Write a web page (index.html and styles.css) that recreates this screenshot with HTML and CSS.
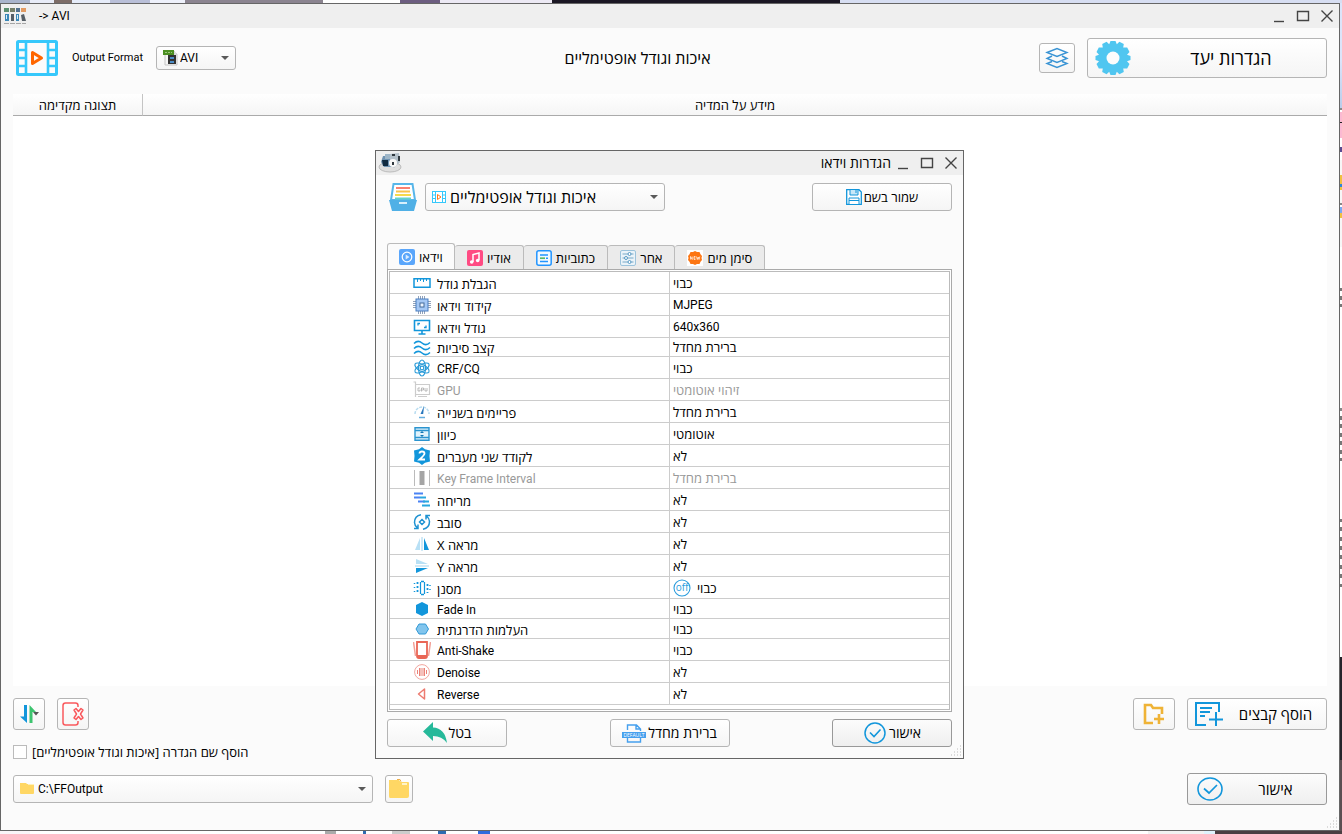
FILE: index.html
```html
<!DOCTYPE html>
<html lang="he">
<head>
<meta charset="utf-8">
<title>-&gt; AVI</title>
<link rel="stylesheet" href="styles.css">
</head>
<body>
<main class="window">
  <header class="titlebar">
    <svg class="app-icon" viewBox="0 0 24 18" aria-hidden="true"><rect x="1" y="1" width="5" height="4" fill="#5b8f70"/><rect x="7" y="1" width="5" height="4" fill="#77806a"/><rect x="13" y="1" width="4" height="4" fill="#53718d"/><rect x="18" y="1" width="5" height="4" fill="#e19a62"/><path d="M2 7h4v7H2zM13 7h3v7h-3z" fill="#3b88b8"/><path d="M8 7h3v7H8zM18 8l3-1 2 7h-4z" fill="#555e66"/><path d="M3 8h1v4H3zM14 8h1v4h-1z" fill="#d8edf5"/><path d="M1 16.500h22" stroke="#a5a5a5" stroke-dasharray="5 1"/></svg>
    <h1 class="window-title" lang="en">-&gt; AVI</h1>
    <div class="controls">
      <button aria-label="Minimize"><svg viewBox="0 0 14 14"><path d="M2 12.500h10"/></svg></button>
      <button aria-label="Maximize"><svg viewBox="0 0 14 14"><path d="M1.500 2.500h11v9h-11z"/></svg></button>
      <button aria-label="Close"><svg viewBox="0 0 14 14"><path d="M1.500 1.500l11 11M12.500 1.500l-11 11"/></svg></button>
    </div>
  </header>

  <section class="toolbar">
    <svg class="film" viewBox="0 0 42 36" aria-hidden="true"><rect x="1.500" y="1.500" width="39" height="33" rx="1" fill="none" stroke="#36c8fb" stroke-width="3"/><path d="M10 1v34M32 1v34M2 10h8M2 18h8M2 26h8M32 10h8M32 18h8M32 26h8" stroke="#36c8fb" stroke-width="2.600"/><path d="M16.500 12.500v11l9-5.500z" fill="none" stroke="#ff6600" stroke-width="3" stroke-linejoin="round"/></svg>
    <label class="format-label" for="format" lang="en">Output Format</label>
    <div class="combo combo-format" lang="en">
      <svg class="combo-icon" viewBox="0 0 16 16" aria-hidden="true"><path d="M3 1h9l3 3v11H3z" fill="#f6f6f6" stroke="#c4c4c4"/><path d="M12 1v3h3" fill="#fff" stroke="#c4c4c4"/><path d="M1 0h11v5H1z" fill="#4c8f22"/><path d="M3 2.500h7" stroke="#9cc77c" stroke-dasharray="2 1"/><rect x="6" y="5" width="8" height="9" fill="#333"/><path d="M8 7h4v2H8zM8 11h4v2H8z" fill="#4b8dc8"/></svg>
      <select id="format"><option>AVI</option></select>
    </div>
    <h2 class="quality" dir="rtl">איכות וגודל אופטימליים</h2>
    <button class="btn btn-layers" aria-label="Layers"><svg viewBox="0 0 24 22"><path d="M2 5.500l10-4 10 4-10 4zM7 9l-5 2.500 10 4 10-4L17 9M7 14.500L2 16.500l10 4 10-4-5-2" fill="none" stroke="#3a94d4" stroke-width="1.400"/></svg></button>
    <button class="btn btn-output" dir="ltr"><svg viewBox="0 0 36 36"><path d="M15.500 1h5l1.300 3.300 2.600-2.600 4.400 2.400-.6 3.500h4l2.300 4.500-2.500 2.600 3.500 1.300v4l-3.500 1.300 2.500 2.600-2.300 4.500h-4l.6 3.500-4.400 2.400-2.600-2.600L20.500 35h-5l-1.300-3.300-2.600 2.600-4.400-2.400.6-3.500h-4l-2.300-4.500 2.500-2.600L.5 20v-4L4 14.700l-2.500-2.600 2.300-4.500h4l-.6-3.500 4.400-2.400 2.600 2.600z" fill="#50c6f0"/><circle cx="18" cy="18" r="6.500" fill="#fcfcfc"/></svg><span>הגדרות יעד</span></button>
  </section>

  <section class="media">
    <table class="media-table">
      <thead><tr><th class="preview" scope="col">תצוגה מקדימה</th><th scope="col">מידע על המדיה</th></tr></thead>
    </table>
  </section>

  <footer class="footer">
    <div class="row row-files">
      <button class="btn btn-square" aria-label="Sort"><svg viewBox="0 0 20 20"><path d="M8 1v18L1 12.500h4V1z" fill="#1296db"/><path d="M10.500 19V1l6.500 7h-3.500v11z" fill="#3dc46f"/><path d="M14 8h6l-3 3.500z" fill="#555"/></svg></button>
      <button class="btn btn-square" aria-label="Remove"><svg class="remove-icon" viewBox="0 0 24 26"><path d="M17 6V4.500Q17 2 14.500 2H4.500Q2 2 2 4.500v17Q2 24 4.500 24h10Q17 24 17 21.500V20" fill="none" stroke="#f9595d" stroke-width="1.500"/><path d="M13 9l2-1.500 2.500 3 2.500-3L22 9l-2.500 4 2.500 4-2 1.500-2.500-3-2.500 3L13 17l2.500-4z" fill="none" stroke="#f9595d" stroke-width="1.500" stroke-linejoin="round"/></svg></button>
      <span class="spacer"></span>
      <button class="btn btn-folder-add" aria-label="Add folder"><svg viewBox="0 0 22 22"><path d="M10 20H2V2h6l2 3h9v6" fill="none" stroke="#efb336" stroke-width="2.600"/><path d="M11 16h10M16 11v10" stroke="#efb336" stroke-width="2.600"/></svg></button>
      <button class="btn btn-main" dir="ltr"><svg viewBox="0 0 30 26"><path d="M25 11V2H2v22h10M6 7h12M6 11h10M6 15h5" fill="none" stroke="#1296db" stroke-width="2"/><path d="M15 18.500h14M22 11v14" stroke="#1296db" stroke-width="2"/></svg><span>הוסף קבצים</span></button>
    </div>
    <div class="row row-option">
      <input type="checkbox" id="add-name"><label for="add-name" dir="rtl">הוסף שם הגדרה [איכות וגודל אופטימליים]</label>
    </div>
    <div class="row row-target">
      <div class="combo combo-path" lang="en">
        <svg class="combo-icon" viewBox="0 0 16 16" aria-hidden="true"><path d="M1 2h6l1 1h6q1 0 1 1v8q0 1-1 1H2q-1 0-1-1z" fill="#ffd764"/><path d="M9 3h6v1H9z" fill="#fff0b6"/></svg>
        <select aria-label="Output folder"><option>C:\FFOutput</option></select>
      </div>
      <button class="btn btn-browse" aria-label="Browse"><svg viewBox="0 0 22 22"><path d="M1 2h10l2 2h7q1 0 1 1v13q0 2-2 2H2q-1 0-1-2z" fill="#ffd764"/><path d="M14 5h5v2h-5z" fill="#fff3c8"/><path d="M9 1.500h3l1 2" stroke="#efb04c" fill="none"/></svg></button>
      <span class="spacer"></span>
      <button class="btn btn-main btn-default" dir="ltr"><svg viewBox="0 0 30 26"><ellipse cx="16" cy="13" rx="12" ry="11" fill="none" stroke="#1296db" stroke-width="1.600"/><path d="M10 12.500l5 4.500 8-8" fill="none" stroke="#1296db" stroke-width="1.700"/></svg><span>אישור</span></button>
    </div>
    <svg class="grip" viewBox="0 0 12 12" aria-hidden="true"><path d="M10 1h1M7 4h1M10 4h1M4 7h1M7 7h1M10 7h1M1 10h1M4 10h1M7 10h1M10 10h1"/></svg>
  </footer>
</main>

<section class="dialog" role="dialog" aria-labelledby="dialog-title">
  <header class="titlebar">
    <svg class="app-icon" viewBox="0 0 24 20" aria-hidden="true"><ellipse cx="12" cy="14" rx="11" ry="5" fill="#dedede" stroke="#bbb"/><path d="M5 3h7l2 11H6L3 9z" fill="#6f93b2"/><path d="M4 7h6v6H5z" fill="#102a40"/><path d="M7 1h5v5H7z" fill="#9eb6c8"/><path d="M12 1l9-1 1 9-6 6-4-5z" fill="#b4c0c9"/><circle cx="15" cy="10" r="4" fill="#f8f8f8"/><path d="M14 1h3v2h-3zM20 3h2v5h-2zM14 9h2v3h-2z" fill="#30383e"/></svg>
    <h2 class="dialog-title" id="dialog-title">הגדרות וידאו</h2>
    <div class="controls">
      <button aria-label="Minimize"><svg viewBox="0 0 14 14"><path d="M2 12.500h10"/></svg></button>
      <button aria-label="Maximize"><svg viewBox="0 0 14 14"><path d="M1.500 2.500h11v9h-11z"/></svg></button>
      <button aria-label="Close"><svg viewBox="0 0 14 14"><path d="M1.500 1.500l11 11M12.500 1.500l-11 11"/></svg></button>
    </div>
  </header>

  <div class="profile">
    <svg class="tray" viewBox="0 0 28 28" aria-hidden="true"><path d="M4.500 1h19l2.500 16H2z" fill="#fff" stroke="#58b6e9" stroke-width="2"/><path d="M7 5h14" stroke="#f98070" stroke-width="2"/><path d="M7 8.500h14" stroke="#f8c34c" stroke-width="2"/><path d="M6 12h16" stroke="#f5d94d" stroke-width="2"/><path d="M6 15.500h16" stroke="#66d3c9" stroke-width="2"/><path d="M0 17h28l-3 11H3z" fill="#50b0e6"/><path d="M10 20h8" stroke="#d7effc" stroke-width="2"/></svg>
    <div class="combo combo-profile">
      <svg class="combo-icon" viewBox="0 0 16 16" aria-hidden="true"><rect x="1.500" y="2.500" width="13" height="11" fill="#fff" stroke="#36c8fb"/><path d="M4.500 2v12M11.500 2v12M2 6h3M2 9.500h3M11 6h3M11 9.500h3" stroke="#36c8fb"/><path d="M6.500 5.500v5l3.500-2.500z" fill="none" stroke="#ff7619"/></svg>
      <select aria-label="Profile"><option>איכות וגודל אופטימליים</option></select>
    </div>
    <span class="spacer"></span>
    <button class="btn btn-save" dir="ltr"><svg viewBox="0 0 16 16"><path d="M.7.700H13L15.300 3v12.300H.7z" fill="#fff" stroke="#1296db" stroke-width="1.300"/><path d="M4 1v5h8V1" fill="#c8e8f8" stroke="#1296db"/><path d="M3 15V9h10v6M3 11.500h10" fill="#fff" stroke="#1296db"/><path d="M10 1v3" stroke="#1296db"/></svg><span>שמור בשם</span></button>
  </div>

  <div class="tabs" role="tablist">
    <button class="tab tab-active" role="tab" aria-selected="true"><svg viewBox="0 0 16 16"><rect width="16" height="16" rx="2" fill="#5aa6fb"/><circle cx="8" cy="8" r="4.800" fill="none" stroke="#fff" stroke-width="1.200"/><path d="M6.700 5.500v5L10.500 8z" fill="#d9ebff"/></svg><span>וידאו</span></button>
    <button class="tab" role="tab"><svg viewBox="0 0 16 16"><rect width="16" height="16" rx="2" fill="#ff4b83"/><path d="M6 12V4.500l6-1.500v7" fill="none" stroke="#fff" stroke-width="1.500"/><circle cx="4.700" cy="12" r="1.800" fill="#fff"/><circle cx="10.700" cy="10.500" r="1.800" fill="#fff"/></svg><span>אודיו</span></button>
    <button class="tab" role="tab"><svg viewBox="0 0 16 16"><rect x=".8" y=".8" width="14.400" height="14.400" rx="2" fill="#f2f9ff" stroke="#2295ff" stroke-width="1.500"/><path d="M4 5h8M4 11.500h8" stroke="#2295ff" stroke-width="1.300"/><path d="M4 8.200h5" stroke="#59b969" stroke-width="1.700"/><path d="M10 8.200h2" stroke="#2295ff" stroke-width="1.500"/></svg><span>כתוביות</span></button>
    <button class="tab" role="tab"><svg viewBox="0 0 16 16"><rect x=".5" y=".5" width="15" height="15" rx="1.500" fill="#eaf3f9" stroke="#9cc3dc"/><path d="M2.500 4h11M2.500 8h11M2.500 12h11" stroke="#79a9c7"/><g fill="#fff" stroke="#579ac5"><circle cx="9.500" cy="4" r="1.500"/><circle cx="6" cy="8" r="1.500"/><circle cx="9.500" cy="12" r="1.500"/></g></svg><span>אחר</span></button>
    <button class="tab" role="tab"><svg viewBox="0 0 16 16"><path fill="#fff" d="M0 0h16v16H0z"/><path d="M8 1l2 1 2.500 0 1 2.200L15 6l-.5 2 .5 2-1.500 1.800-1 2.200H10L8 15l-2-1H3.500l-1-2.200L1 10l.5-2L1 6l1.500-1.800L3.500 2H6z" fill="#fd7613"/><path d="M3.500 9.500v-3l1.700 3v-3M8.500 6.500H7v3h1.500M7 8h1.500M9.500 6.500l.8 3 .9-2.500.8 2.500.8-3" fill="none" stroke="#fff" stroke-width=".7"/></svg><span>סימן מים</span></button>
  </div>

  <div class="panel" role="tabpanel">
    <div class="sheet">
    <table class="props">
      <colgroup><col class="col-name"><col></colgroup>
      <tbody>
      <tr><th scope="row"><svg viewBox="0 0 18 18"><path d="M1 4.700h16v8.600H1z" fill="#fff" stroke="#1296db" stroke-width="1.500"/><path d="M4.500 5v3M7.500 5v2M10.500 5v3M13.500 5v2" stroke="#1296db"/></svg><span>הגבלת גודל</span></th><td>כבוי</td></tr>
      <tr><th scope="row"><svg viewBox="0 0 18 18"><path d="M5.500 0v18M7.500 0v18M9.500 0v18M11.500 0v18M0 5.500h18M0 7.500h18M0 9.500h18M0 11.500h18" stroke="#758aa8" stroke-width=".8"/><rect x="3" y="3" width="12" height="12" fill="#a5c8f5" stroke="#4a7fc0"/><rect x="7" y="7" width="4" height="4" fill="#edf5ff" stroke="#446b9b"/></svg><span>קידוד וידאו</span></th><td lang="en">MJPEG</td></tr>
      <tr><th scope="row"><svg viewBox="0 0 18 18"><path d="M1.500 2.500h15v10h-15zM9 13v3M5.500 16h7" fill="none" stroke="#1296db" stroke-width="1.600"/><path d="M5 7.500V5.500h2M13 7.500v2h-2" fill="none" stroke="#1296db" stroke-width="1.300"/></svg><span>גודל וידאו</span></th><td lang="en">640x360</td></tr>
      <tr class="shortest"><th scope="row"><svg viewBox="0 0 18 18"><path d="M1 4.500q4-4 8-.5t8-.5M1 9.500q4-4 8-.5t8-.5M1 14.500q4-4 8-.5t8-.5" fill="none" stroke="#1296db" stroke-width="1.500"/></svg><span>קצב סיביות</span></th><td>ברירת מחדל</td></tr>
      <tr><th scope="row"><svg viewBox="0 0 18 18"><g fill="none" stroke="#2a9bd8" stroke-width="1.200"><ellipse cx="9" cy="9" rx="3.500" ry="8"/><ellipse cx="9" cy="9" rx="3.500" ry="8" transform="rotate(60 9 9)"/><ellipse cx="9" cy="9" rx="3.500" ry="8" transform="rotate(120 9 9)"/><circle cx="9" cy="9" r="1.800"/></g></svg><span lang="en">CRF/CQ</span></th><td>כבוי</td></tr>
      <tr class="off"><th scope="row"><svg viewBox="0 0 18 18"><path d="M2.500 3.500h14v10h-14zM.5 1h2v15M5 15.500h9" fill="none" stroke="#ccc" stroke-width="1.200"/><path d="M7 7H5v3h2V8.500M8.500 10.500V7h2v2h-2M12 7v3h2V7" fill="none" stroke="#aaa" stroke-width=".8"/></svg><span lang="en">GPU</span></th><td>זיהוי אוטומטי</td></tr>
      <tr><th scope="row"><svg viewBox="0 0 18 18"><path d="M2 11a7 7 0 0 1 14 0" fill="none" stroke="#b8dcf0" stroke-width="1.500" stroke-dasharray="3 1"/><path d="M7.500 11L11 3l-.8 8z" fill="#2877bd"/><path d="M6 14.500h6" stroke="#67aede" stroke-width="1.500"/></svg><span>פריימים בשנייה</span></th><td>ברירת מחדל</td></tr>
      <tr><th scope="row"><svg viewBox="0 0 18 18"><path d="M2 2.700h14v12.600H2zM2 5.500h14M2 12.500h14" fill="#e1f3fc" stroke="#2a94cf" stroke-width="1.400"/><path d="M9 6l2 2H7zM9 12l2-2H7z" fill="#1276b3"/></svg><span>כיוון</span></th><td>אוטומטי</td></tr>
      <tr><th scope="row"><svg viewBox="0 0 18 18"><path d="M9 0l3 2.200 5 1.300-.5 5.500.5 5.500-5 1.300L9 18l-3-2.200-5-1.300.5-5.500L1 3.500l5-1.300z" fill="#1296db"/><path d="M6.500 6.500Q6.500 4.500 9 4.500t2.500 2Q11.500 8 6.500 12.500h5.500" fill="none" stroke="#fff" stroke-width="1.800"/></svg><span>לקודד שני מעברים</span></th><td>לא</td></tr>
      <tr class="off"><th scope="row"><svg viewBox="0 0 18 18"><path d="M1.500 1v16M16.500 1v16" stroke="#bbb"/><path d="M6.500 2h5v14h-5z" fill="#a5a5a5"/></svg><span lang="en">Key Frame Interval</span></th><td>ברירת מחדל</td></tr>
      <tr><th scope="row"><svg viewBox="0 0 18 18"><path d="M1 2.500h9M1 6.500h6M5 10.500h7" stroke="#4a83f4" stroke-width="2"/><path d="M7 6.500h6M10 10.500h6M9 14.500h8" stroke="#29a7df" stroke-width="2"/></svg><span>מריחה</span></th><td>לא</td></tr>
      <tr><th scope="row"><svg viewBox="0 0 18 18"><path d="M8 1.800Q1.500 3 1.500 9.500q0 3 3 5.500M10 16.200q6.500-1.200 6.500-7.700 0-3-3-5.500M1 15.500h4v-4M17 2.500h-4v4" fill="none" stroke="#1e92d2" stroke-width="1.500"/><path d="M9 6.500l2.500 2.500L9 11.500 6.500 9z" fill="none" stroke="#1e92d2" stroke-width="1.500"/></svg><span>סובב</span></th><td>לא</td></tr>
      <tr><th scope="row"><svg viewBox="0 0 18 18"><path d="M7 3v12H2z" fill="#b8e0f5"/><path d="M9 2v14" stroke="#a2d4ee"/><path d="M11 3v12h5z" fill="#1296db"/></svg><span dir="ltr">X מראה</span></th><td>לא</td></tr>
      <tr><th scope="row"><svg viewBox="0 0 18 18"><path d="M3 7V2l12 5z" fill="#b8e0f5"/><path d="M2 9h14" stroke="#a2d4ee"/><path d="M3 11v5l12-5z" fill="#1296db"/></svg><span dir="ltr">Y מראה</span></th><td>לא</td></tr>
      <tr><th scope="row"><svg viewBox="0 0 18 18"><path d="M8 2.500h3M8 15.500h3" stroke="#1296db" stroke-width="1.400"/><path d="M7.500 3v12M11.500 3v12" stroke="#1296db" stroke-width="1.200"/><path d="M4.500 3v12M14.500 5v9" stroke="#1296db" stroke-width="1.800" stroke-dasharray="2 2"/><path d="M1.500 4v10M17 6v6" stroke="#1296db" stroke-width="1.500" stroke-dasharray="1 3"/></svg><span>מסנן</span></th><td><span class="value-off"><svg viewBox="0 0 18 18"><circle cx="9" cy="9" r="8" fill="none" stroke="#2a9ddd" stroke-width="1.100"/><text x="9" y="12" text-anchor="middle">off</text></svg>כבוי</span></td></tr>
      <tr class="short"><th scope="row"><svg viewBox="0 0 18 18"><path d="M9 2l6 3v8l-6 3-6-3V5z" fill="#1296db"/></svg><span lang="en">Fade In</span></th><td>כבוי</td></tr>
      <tr class="short"><th scope="row"><svg viewBox="0 0 18 18"><path d="M6 4h6.500l3 5-3 5H6L3 9z" fill="#82c5ed" stroke="#3299d6"/></svg><span>העלמות הדרגתית</span></th><td>כבוי</td></tr>
      <tr><th scope="row"><svg viewBox="0 0 18 18"><path d="M4 1h10v14q0 2-2 2H6q-2 0-2-2z" fill="#fff" stroke="#e96656" stroke-width="1.800"/><path d="M4 14h10v3H4z" fill="#e96656"/><path d="M.5 1l2 14M17.500 1l-2 14" stroke="#f2a198" stroke-width="1.500"/></svg><span lang="en">Anti-Shake</span></th><td>כבוי</td></tr>
      <tr><th scope="row"><svg viewBox="0 0 18 18"><circle cx="9" cy="9" r="7.400" fill="none" stroke="#f1a7a0"/><path d="M4.500 7v4M6.500 5v8M8 5v8M10 5v8M11.500 5v8M13.500 7v4" stroke="#eb8177"/></svg><span lang="en">Denoise</span></th><td>לא</td></tr>
      <tr><th scope="row"><svg viewBox="0 0 18 18"><path d="M5.500 9l6-5v10z" fill="none" stroke="#ed7b70" stroke-width="1.500" stroke-linejoin="round"/></svg><span lang="en">Reverse</span></th><td>לא</td></tr>
      </tbody>
    </table>
    </div>
  </div>

  <div class="actions">
    <button class="btn btn-action" dir="ltr"><svg viewBox="0 0 24 24"><path d="M0 10.500L10 1v5.500Q22 7 24 22 19 15 10 15v5z" fill="#26b99a"/></svg><span>בטל</span></button>
    <button class="btn btn-action" dir="ltr"><svg viewBox="0 0 24 24"><path d="M5.500 9V4h9l4 4v2M5.500 17v4h13v-4M14 4v4h4.500" fill="none" stroke="#46a0ee" stroke-width="1.400"/><path d="M0 11h24v6H0z" fill="#46a0ee"/><text class="tag" x="12" y="16" text-anchor="middle">DEFAULT</text></svg><span>ברירת מחדל</span></button>
    <button class="btn btn-action btn-default" dir="ltr"><svg viewBox="0 0 24 24"><circle cx="12" cy="12" r="10" fill="none" stroke="#1296db" stroke-width="1.500"/><path d="M7 11.500l4 4 6.500-7" fill="none" stroke="#1296db" stroke-width="1.600"/></svg><span>אישור</span></button>
  </div>
  <svg class="grip" viewBox="0 0 12 12" aria-hidden="true"><path d="M10 1h1M7 4h1M10 4h1M4 7h1M7 7h1M10 7h1M1 10h1M4 10h1M7 10h1M10 10h1"/></svg>
</section>
</body>
</html>
```
FILE: styles.css
```css
* { box-sizing: border-box; }

body {
  margin: 0;
  min-height: 100vh;
  padding: 3px 2px 3px 0;
  display: flex;
  position: relative;
  font: 13px/16px "Open Sans", "Noto Sans", sans-serif;
  color: #000;
  background:
    linear-gradient(90deg, #a9b4cc 0 30px, #e8ecf8 30px 54px, #7c6c67 54px 72px, #e6ecf9 72px 110px, #b9bfd8 110px 150px, #eef1fb 150px 185px, #8b8490 185px 323px, #fff 323px 400px, #6c5d80 400px 440px, #ece9f4 440px 552px, #1b1724 552px 840px, #d7def2 840px 1342px) 0 0 / 100% 3px no-repeat,
    linear-gradient(90deg, #faf5f8 0 30px, #fff 30px 325px, #aaa 325px 336px, #fff 336px 363px, #2f6bb0 363px 366px, #fff 366px 392px, #ccc 392px 410px, #fff 410px 438px, #2f6bb0 438px 446px, #fff 446px 478px, #2f6bdd 478px 490px, #fff 490px 1148px, #f2f2f2 1148px 1204px, #def3fd 1204px 1215px, #4b3f42 1215px) 0 100% / 100% 3px no-repeat,
    linear-gradient(#dbe5fa 0 60px, #b9cdea 108px, #888 108px 110px, #fff 110px 112px, #fbb9d2 112px 122px, #222 122px 123px, #fbb9d2 123px 138px, #fff 138px 147px, #5a4c91 147px 152px, #fff 152px 160px, #f7f7f7 160px 175px, #f0c040 175px 184px, #2f86d8 184px 187px, #f0c040 187px 190px, #f7f7f7 190px 203px, #888 203px 205px, #fff 205px 207px, #79a9f3 207px 213px, #f0c040 213px 218px, #f7f7f7 218px 247px, #fff 247px 288px, #777 288px 291px, #fff 291px 296px, #777 296px 300px, #fff 300px 304px, #777 304px 307px, #fff 307px 408px, #888 408px 411px, #fff 411px 416px, #777 416px 420px, #fff 420px 424px, #777 424px 428px, #fff 428px 433px, #777 433px 437px, #fff 437px 441px, #777 441px 445px, #fff 445px 450px, #777 450px 454px, #fff 454px 458px, #777 458px 461px, #fff 461px 519px, #777 519px 522px, #fff 522px 527px, #777 527px 531px, #fff 531px 537px, #777 537px 541px, #fff 541px 546px, #777 546px 550px, #fff 550px 555px, #777 555px 559px, #fff 559px 565px, #777 565px 569px, #fff 569px 574px, #777 574px 578px, #fff 578px 584px, #777 584px 587px, #fff 587px 657px, #25232b 657px 760px, #5b4e52 760px) 100% 0 / 2px 100% no-repeat,
    #fff;
}

[lang="en"] { font-family: Roboto, "Open Sans", sans-serif; font-size: 12px; }
h1, h2 { margin: 0; font-weight: 400; }
button, select, input { font: inherit; color: inherit; margin: 0; }
svg { display: block; flex: none; }
.spacer { flex: 1; }

.window {
  flex: 1;
  min-width: 0;
  display: flex;
  flex-direction: column;
  border: 1px solid #666;
  background: #fbfbfb;
  position: relative;
}

.titlebar {
  display: flex;
  align-items: center;
  height: 24px;
  background: #efefef;
}
.app-icon { width: 24px; height: 20px; margin: 0 12px 0 2px; }
.window-title { flex: 1; }
.dialog-title { font-size: 14px; flex: 1; text-align: right; }
.controls { display: flex; gap: 10px; padding: 0 5px; }
.controls button { padding: 0; border: 0; background: none; width: 14px; height: 14px; }
.controls svg { width: 14px; height: 14px; fill: none; stroke: #444; stroke-width: 1.4; }

.btn {
  display: flex;
  align-items: center;
  justify-content: center;
  padding: 0;
  border: 1px solid #b5b5b5;
  border-radius: 3px;
  background: linear-gradient(#fff, #f5f5f5);
  flex: none;
}
.btn-default { border-color: #999; background: linear-gradient(#fcfcfc, #efefef); }

.combo { position: relative; flex: none; }
.combo select {
  appearance: none;
  width: 100%;
  height: 28px;
  padding: 0 20px 0 24px;
  border: 1px solid #b5b5b5;
  border-radius: 3px;
  background: linear-gradient(#fff, #f5f5f5);
}
.combo-icon { position: absolute; left: 6px; top: 6px; width: 16px; height: 16px; pointer-events: none; }
.combo::after {
  content: "";
  position: absolute;
  right: 7px;
  top: 12px;
  border: 4px solid transparent;
  border-top-color: #5a5a5a;
  border-bottom: 0;
  pointer-events: none;
}

.toolbar { display: flex; align-items: center; height: 60px; padding: 0 12px 0 15px; }
.film { width: 42px; height: 36px; }
.format-label { min-width: 72px; margin: 0 12px 0 14px; font-size: 11px; }
.combo-format { width: 80px; }
.combo-format select { height: 24px; padding-left: 23px; }
.combo-format .combo-icon { top: 4px; }
.combo-format::after { top: 10px; }
.quality { flex: 1; text-align: center; font-size: 16px; }
.btn-layers { width: 36px; height: 30px; margin-right: 12px; }
.btn-layers svg { width: 24px; height: 22px; }
.btn-output { width: 240px; height: 40px; padding: 0 7px; font-size: 18px; }
.btn-output svg { width: 36px; height: 36px; }
.btn-output span { flex: 1; padding-left: 12px; }

.media { flex: 1; margin: 6px 12px 0; background: #fff; }
.media-table { width: 100%; border-collapse: separate; border-spacing: 0; table-layout: fixed; }
.media-table th {
  height: 22px;
  padding: 1px 0 0;
  font-weight: 400;
  border-bottom: 1px solid #aaa;
  background: linear-gradient(#fff, #f5f5f5);
}
.media-table .preview { width: 130px; border-right: 1px solid #c4c4c4; }

.footer { padding: 12px 12px 25px; position: relative; }
.row { display: flex; align-items: center; gap: 12px; }
.row-option { gap: 5px; height: 43px; }
.row-option input { appearance: none; width: 14px; height: 14px; border: 1px solid #bbb; background: #fff; }
.btn-square { width: 32px; height: 32px; }
.btn-square svg { width: 20px; height: 20px; }
.btn-square .remove-icon { width: 24px; height: 26px; }
.btn-folder-add { width: 42px; height: 32px; }
.btn-folder-add svg { width: 22px; height: 22px; }
.btn-main { width: 140px; height: 32px; padding: 0 7px 0 6px; font-size: 15px; }
.btn-main svg { width: 30px; height: 26px; }
.btn-main span { flex: 1; padding-left: 8px; }
.combo-path { width: 360px; }
.btn-browse { width: 28px; height: 28px; }
.btn-browse svg { width: 22px; height: 22px; }

.grip { position: absolute; right: 1px; bottom: 1px; width: 12px; height: 12px; stroke: #bbb; }

.dialog {
  position: absolute;
  left: 375px;
  top: 150px;
  width: 589px;
  border: 1px solid #666;
  background: #fbfbfb;
  padding-bottom: 11px;
}
.profile { display: flex; align-items: center; gap: 8px; padding: 8px 11px 0 13px; }
.tray { width: 28px; height: 28px; }
.combo-profile { width: 240px; font-size: 16px; }
.btn-save { width: 140px; height: 28px; gap: 2px; }
.btn-save svg { width: 16px; height: 16px; }

.tabs { display: flex; align-items: flex-end; padding: 32px 11px 0; }
.tab {
  display: flex;
  align-items: center;
  justify-content: center;
  gap: 4px;
  height: 24px;
  padding: 0 12px;
  border: 1px solid #bbb;
  border-bottom: 0;
  border-left-width: 0;
  border-radius: 3px 3px 0 0;
  background: #ebebeb;
}
.tab svg { width: 16px; height: 16px; }
.tab span { padding-top: 1px; }
.tab-active { height: 26px; padding: 0 11px; border-left-width: 1px; background: #fbfbfb; }

.panel { margin: 0 11px; padding: 1px; border: 1px solid #aaa; background: #fff; }
.sheet { border: 1px solid #bbb; padding-bottom: 4px; }
.props { width: 100%; border-collapse: separate; border-spacing: 0; table-layout: fixed; }
.col-name { width: 280px; }
.props th, .props td {
  height: 22px;
  padding: 0 0 0 3px;
  border-bottom: 1px solid #ccc;
  font-weight: 400;
  text-align: left;
}
.props th { padding-left: 23px; border-right: 1px solid #ccc; }
.props th span { vertical-align: middle; }
.props th svg { display: inline-block; width: 18px; height: 18px; margin: -2px 6px -2px 0; vertical-align: middle; }
.props .short th, .props .short td { height: 20px; }
.props .shortest th, .props .shortest td { height: 19px; }
.off { color: #999; }
.value-off { display: flex; align-items: center; gap: 6px; }
.value-off svg { width: 18px; height: 18px; }
.value-off text { font-size: 10px; fill: #2a9ddd; }

.actions { display: flex; justify-content: space-between; padding: 7px 11px 0; }
.btn-action { width: 120px; height: 28px; gap: 2px; font-size: 14px; }
.btn-action svg { width: 24px; height: 24px; }
.tag { font-size: 5px; fill: #fff; }
```
